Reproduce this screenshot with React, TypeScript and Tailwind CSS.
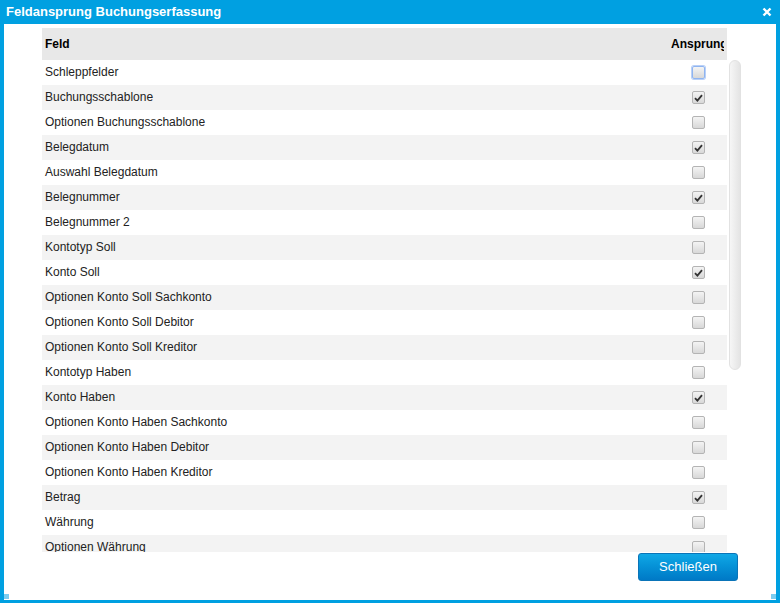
import React from "react";

const rows: { label: string; checked: boolean }[] = [
  { label: "Schleppfelder", checked: false },
  { label: "Buchungsschablone", checked: true },
  { label: "Optionen Buchungsschablone", checked: false },
  { label: "Belegdatum", checked: true },
  { label: "Auswahl Belegdatum", checked: false },
  { label: "Belegnummer", checked: true },
  { label: "Belegnummer 2", checked: false },
  { label: "Kontotyp Soll", checked: false },
  { label: "Konto Soll", checked: true },
  { label: "Optionen Konto Soll Sachkonto", checked: false },
  { label: "Optionen Konto Soll Debitor", checked: false },
  { label: "Optionen Konto Soll Kreditor", checked: false },
  { label: "Kontotyp Haben", checked: false },
  { label: "Konto Haben", checked: true },
  { label: "Optionen Konto Haben Sachkonto", checked: false },
  { label: "Optionen Konto Haben Debitor", checked: false },
  { label: "Optionen Konto Haben Kreditor", checked: false },
  { label: "Betrag", checked: true },
  { label: "Währung", checked: false },
  { label: "Optionen Währung", checked: false },
  { label: "Buchungstext", checked: true },
  { label: "Kostenstelle", checked: false },
];

function Box({ checked, focused }: { checked: boolean; focused?: boolean }) {
  return (
    <span
      className={`flex h-[13px] w-[13px] items-center justify-center rounded-[2px] border bg-gradient-to-b from-[#f4f4f4] to-[#d8d8d8] ${
        focused ? "border-[#8fb4f0] ring-1 ring-[#b9d0f7]" : "border-[#b4b4b4]"
      }`}
    >
      {checked && (
        <svg width="9" height="8" viewBox="0 0 9 8">
          <path d="M1 4.2 L3.4 6.6 L8 1.2" fill="none" stroke="#333" strokeWidth="1.8" />
        </svg>
      )}
    </span>
  );
}

export default function App() {
  return (
    <div className="flex h-[603px] w-[780px] flex-col bg-[#00a0e1] font-['Liberation_Sans',Arial,sans-serif]">
      <div className="flex h-[24px] items-center justify-between pl-[6px] pr-[8px] text-white">
        <span className="text-[13px] font-bold">Feldansprung Buchungserfassung</span>
        <svg width="10" height="10" viewBox="0 0 10 10">
          <path d="M1.5 1.5 L8.5 8.5 M8.5 1.5 L1.5 8.5" stroke="#fff" strokeWidth="2.4" />
        </svg>
      </div>
      <div className="relative mx-[4px] mb-[3px] flex flex-1 flex-col bg-white pl-[38px] pr-[38px] pt-[4px]">
        <div className="flex gap-[2px]">
          <div className="flex w-[685px] shrink-0 flex-col">
            <div className="flex h-[32px] items-center bg-[#e8e8e8] pb-[1px] text-[12px] font-bold text-black">
              <span className="flex-1 pl-[3px]">Feld</span>
              <span className="mr-[3px] w-[53px] overflow-hidden whitespace-nowrap">Ansprung</span>
            </div>
            <div className="h-[492px] overflow-hidden">
              {rows.map((r, i) => (
                <div
                  key={r.label}
                  className={`flex h-[25px] items-center text-[12px] text-[#222] ${
                    i % 2 === 1 ? "bg-[#f3f3f3]" : "bg-white"
                  }`}
                >
                  <span className="flex-1 pb-[2px] pl-[3px]">{r.label}</span>
                  <span className="mr-[22px] flex">
                    <Box checked={r.checked} focused={i === 0} />
                  </span>
                </div>
              ))}
            </div>
          </div>
          <div className="w-[12px] shrink-0 pt-[32px]">
            <div className="h-[310px] rounded-full border border-[#e2e2e2] bg-gradient-to-r from-[#f6f6f6] to-[#e4e4e4]" />
          </div>
        </div>
        <div className="mt-[1px] flex justify-end">
          <button className="h-[28px] w-[100px] rounded-[3px] border border-[#0a74b8] bg-gradient-to-b from-[#10a8e6] to-[#0079c6] text-[13px] text-white">
            Schließen
          </button>
        </div>
        <span className="absolute bottom-[1px] left-0 h-[5px] w-[5px] bg-[#7ccdf0]" />
        <span className="absolute bottom-[1px] right-0 h-[5px] w-[5px] bg-[#7ccdf0]" />
      </div>
    </div>
  );
}
